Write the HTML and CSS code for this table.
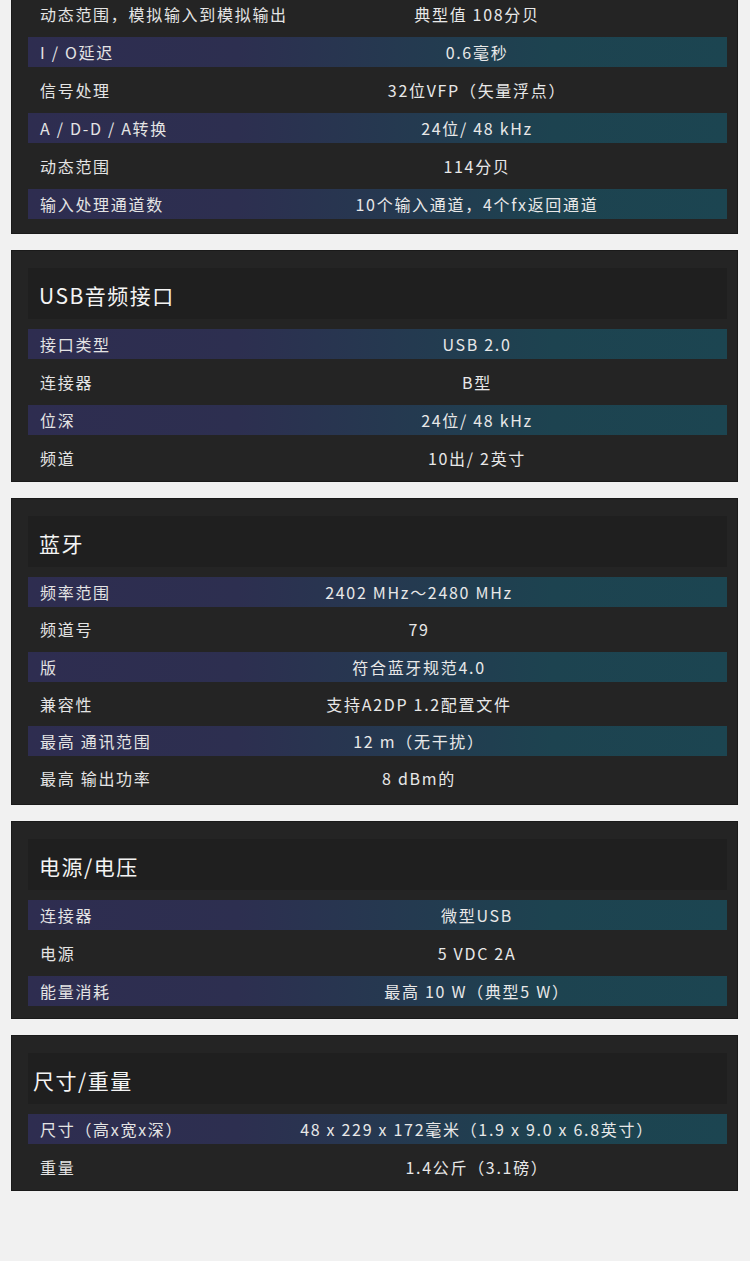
FILE: index.html
```html
<!DOCTYPE html>
<html lang="zh-CN">
<head>
<meta charset="utf-8">
<title>规格</title>
<link rel="stylesheet" href="styles.css">
</head>
<body>
<main class="page">
  <section class="card card--cut">
    <div class="rows">
      <div class="row"><span class="label">动态范围，模拟输入到模拟输出</span><span class="value">典型值 108分贝</span></div>
      <div class="row row--hl"><span class="label">I / O延迟</span><span class="value">0.6毫秒</span></div>
      <div class="row"><span class="label">信号处理</span><span class="value">32位VFP（矢量浮点）</span></div>
      <div class="row row--hl"><span class="label">A / D-D / A转换</span><span class="value">24位/ 48 kHz</span></div>
      <div class="row"><span class="label">动态范围</span><span class="value">114分贝</span></div>
      <div class="row row--hl"><span class="label">输入处理通道数</span><span class="value">10个输入通道，4个fx返回通道</span></div>
    </div>
  </section>

  <section class="card">
    <h2 class="card-title">USB音频接口</h2>
    <div class="rows">
      <div class="row row--hl"><span class="label">接口类型</span><span class="value">USB 2.0</span></div>
      <div class="row"><span class="label">连接器</span><span class="value">B型</span></div>
      <div class="row row--hl"><span class="label">位深</span><span class="value">24位/ 48 kHz</span></div>
      <div class="row"><span class="label">频道</span><span class="value">10出/ 2英寸</span></div>
    </div>
  </section>

  <section class="card card--bt">
    <h2 class="card-title">蓝牙</h2>
    <div class="rows rows--narrow">
      <div class="row row--hl"><span class="label">频率范围</span><span class="value">2402 MHz～2480 MHz</span></div>
      <div class="row"><span class="label">频道号</span><span class="value">79</span></div>
      <div class="row row--hl"><span class="label">版</span><span class="value">符合蓝牙规范4.0</span></div>
      <div class="row"><span class="label">兼容性</span><span class="value">支持A2DP 1.2配置文件</span></div>
      <div class="row row--hl"><span class="label">最高 通讯范围</span><span class="value">12 m（无干扰）</span></div>
      <div class="row"><span class="label">最高 输出功率</span><span class="value">8 dBm的</span></div>
    </div>
  </section>

  <section class="card card--power">
    <h2 class="card-title">电源/电压</h2>
    <div class="rows">
      <div class="row row--hl"><span class="label">连接器</span><span class="value">微型USB</span></div>
      <div class="row"><span class="label">电源</span><span class="value">5 VDC 2A</span></div>
      <div class="row row--hl"><span class="label">能量消耗</span><span class="value">最高 10 W（典型5 W）</span></div>
    </div>
  </section>

  <section class="card">
    <h2 class="card-title card-title--tight">尺寸/重量</h2>
    <div class="rows">
      <div class="row row--hl"><span class="label">尺寸（高x宽x深）</span><span class="value">48 x 229 x 172毫米（1.9 x 9.0 x 6.8英寸）</span></div>
      <div class="row"><span class="label">重量</span><span class="value">1.4公斤（3.1磅）</span></div>
    </div>
  </section>
</main>
</body>
</html>
```

FILE: styles.css
```css
* {
  box-sizing: border-box;
}

html, body {
  margin: 0;
  padding: 0;
  background: #f1f1f1;
}

body {
  font-family: "Noto Sans CJK SC", "Noto Sans", sans-serif;
  color: #e6e6e6;
}

.page {
  display: flex;
  flex-direction: column;
  gap: 16px;
  padding: 0 12px 0 11px;
}

.card {
  background: #242424;
  border: 1px solid #1a1a1a;
  padding: 17px 10px 8px 16px;
  display: flex;
  flex-direction: column;
  gap: 10px;
}

.card--cut {
  border-top: none;
  padding-top: 0;
  padding-bottom: 14px;
  margin-top: -1px;
}

.card--bt {
  padding-bottom: 11px;
}

.card--power {
  padding-bottom: 12px;
}

.card-title {
  margin: 0;
  height: 51px;
  background: #1f1f1f;
  display: flex;
  align-items: center;
  padding: 3px 11px 0;
  font-size: 21px;
  font-weight: 400;
  letter-spacing: 1.5px;
  color: #f4f4f4;
  line-height: 1;
}

.card-title--tight {
  padding-left: 5px;
}

.rows {
  display: flex;
  flex-direction: column;
  gap: 8px;
}

.rows--narrow {
  gap: 7.3px;
}

.row {
  display: grid;
  grid-template-columns: 187px 1fr;
  align-items: center;
  height: 30px;
  padding-left: 12px;
  font-size: 16px;
  letter-spacing: 1.7px;
  line-height: 30px;
  white-space: nowrap;
}

.rows--narrow .row {
  grid-template-columns: 71px 1fr;
}

.row--hl {
  background: linear-gradient(90deg, #2e2d50 0%, #2d2f50 30%, #243a50 55%, #1d4350 75%, #1c4551 100%);
}

.label {
  color: #e4e4e4;
}

.value {
  text-align: center;
  color: #e8e8e8;
}
```
